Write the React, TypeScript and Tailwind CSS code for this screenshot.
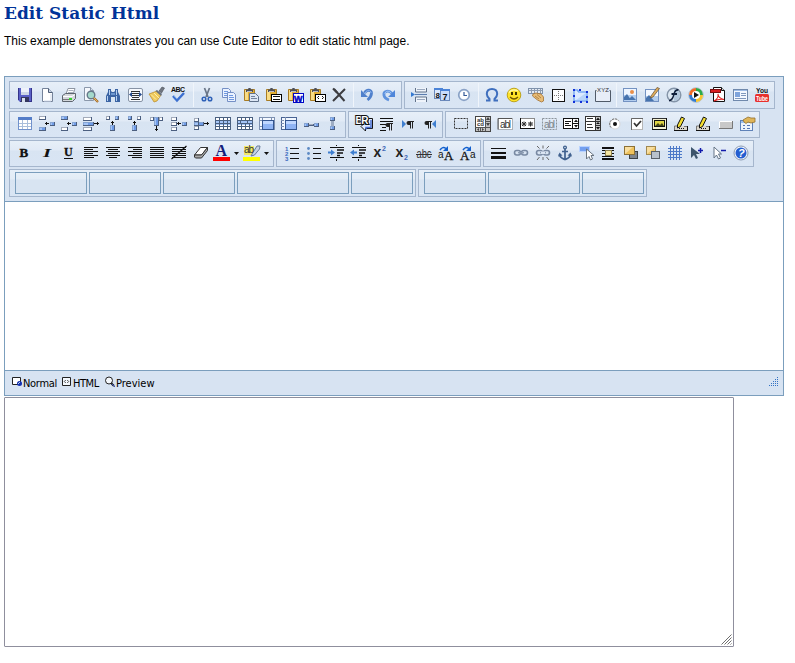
import { createElement, type ReactNode } from "react";

type Node = ReactNode;
const r = (x: number, y: number, w: number, h: number, f: string, s?: string): Node =>
  s ? (
    <rect x={x + 0.5} y={y + 0.5} width={w - 1} height={h - 1} fill={f} stroke={s} />
  ) : (
    <rect x={x} y={y} width={w} height={h} fill={f} />
  );
const p = (d: string, f = "none", s = "none", w = 1): Node => <path d={d} fill={f} stroke={s} strokeWidth={w} />;
const c = (x: number, y: number, q: number, f: string, s = "none", w = 1): Node => (
  <circle cx={x} cy={y} r={q} fill={f} stroke={s} strokeWidth={w} />
);
const t = (x: number, y: number, size: number, s: string, f = "#111", serif = false, bold = true, extra: object = {}): Node => (
  <text
    x={x}
    y={y}
    fontSize={size}
    fill={f}
    fontWeight={bold ? 700 : 400}
    fontFamily={serif ? '"Liberation Serif", serif' : '"Liberation Sans", sans-serif'}
    {...extra}
  >
    {s}
  </text>
);
const icon = (...shapes: Node[]): Node[] => shapes;

const K = "#111";
const B = "#3f7fd0";
const N = "#4a6080";
const LB = "#a4c4f6";

const clip = (): Node[] => [
  p("M4.500 5.500h10v11h-10z", "#e3ae35", "#a87c24"),
  p("M5 6h3v10H5z", "#f8dc86"),
  p("M6 8V5.500h2L8.500 4h2l.5 1.500h2V8z", "#4d4f58"),
  p("M7 7.500h5", "none", "#b9bdc8"),
];
const box = (x: number, y: number, w: number, h: number, blue = false): Node[] => [
  r(x, y, w, h, blue ? LB : "#fff", blue ? "#86a4d2" : "#a3abba"),
  blue && r(x + Math.floor(w / 2), y + 1, Math.ceil(w / 2) - 1, h - 2, "#6f9ce8"),
  p(`M${x} ${y + h - 0.5}h${w}M${x + w - 0.5} ${y}v${h}`, "none", "#4c5f80"),
];
const arL = (x: number, y: number): Node => p(`M${x} ${y + 0.5}h4M${x + 1.5} ${y - 1}v3`, "none", K);
const arR = (x: number, y: number): Node => p(`M${x} ${y + 0.5}h5M${x + 3.5} ${y - 1}v3`, "none", K);
const arU = (x: number, y: number): Node => p(`M${x + 0.5} ${y}v4M${x - 1} ${y + 1.5}h3`, "none", K);
const lines = (rows: [number, number][], col = K): Node => p(rows.map(([x, w], i) => `M${x} ${5.5 + i * 2}h${w}`).join(""), "none", col);
const pilcrow = (x: number, y: number): Node => (
  <>
    {p(`M${x + 3} ${y}h-1.500a2 2 0 0 0 0 4h1.500z`, "#222")}
    {p(`M${x + 2} ${y + 0.5}h5M${x + 3.5} ${y}v7.500M${x + 5.5} ${y}v7.500`, "none", "#222")}
  </>
);

const cutePage = (x: number, y: number): Node[] => [
  p(`M${x}.5 ${y}.5h6l2 2v7h-8z`, "#eaf2ff", "#7590c6"),
  p(`M${x + 2} ${y + 3.5}h4M${x + 2} ${y + 5.5}h5M${x + 2} ${y + 7.5}h5`, "none", "#6f98e0"),
];

const row1a: (Node[] | "sep")[] = [
  icon(
    p("M4 4h14v14H6l-2-2z", "#5a60c6"),
    p("M4 4h1v12H4zM17 4h1v14h-1zM6 17h11v1H6z", "#34348a"),
    r(7, 4, 8, 7, "#eef2fa"),
    p("M7 8h8v3H7z", "#cdd6e6"),
    r(7, 13, 8, 5, "#33365f"),
    r(8, 14, 3, 4, "#d8dfec"),
  ),
  icon(p("M6.500 4.500h6l4 4v9h-10z", "#fff", "#75839a"), p("M12.500 4.500v4h4", "#c8d3e4", "#4f5f78"), p("M15 10v7H8", "none", "#d3dcec")),
  icon(
    p("M8 10l2-5.500h7l-2 6z", "#fff", "#8d95a2"),
    p("M10.500 6.500h5M10 8.500h5", "none", "#a9b1bf"),
    p("M4.500 11.500l3-2h10v5l-3 3h-10z", "#d3d7dc", "#5d646e"),
    p("M5 12.500h9l3-2", "none", "#fff"),
    p("M5 15.500h9", "none", "#777"),
    r(11, 14, 3, 2, "#36cf30"),
  ),
  icon(
    p("M4.500 3.500h6l3 3v10h-9z", "#f5f8fd", "#8b98ab"),
    p("M10.500 3.500v3h3", "#d5dfef", "#8b98ab"),
    c(11, 11, 3.8, "#a4d9cb", "#66788a", 1.4),
    p("M14 14l4 4", "none", "#a46a29", 2.3),
    p("M13.500 13.500l4 4", "none", "#f1cc6d", 0.8),
  ),
  icon(
    p("M6 5h3v2l1 1h2l1-1V5h3v3l2 4v6h-5v-5H9v5H4v-6l2-4z", "#3b64a4"),
    p("M7.500 6v5M14.500 6v5M5.500 12v5M14.500 12v5", "none", "#b8d1f1"),
    p("M9 9h4v2H9z", "#6c96cf"),
  ),
  icon(
    <rect x="4.500" y="4.500" width="14" height="13" rx="1.500" fill="#f7faff" stroke="#8793a5" />,
    p("M7 7.500h9M8 9.500h7M8 11.500h7M8 13.500h7M7 15.500h9", "none", "#333", 1),
    p("M5 10.500l3-2.500v5zM18 10.500l-3-2.500v5z", "#234a8d"),
  ),
  icon(
    p("M13 7l3-4 2.500 1-3 5z", "#707782", "#4a4d54", 0.6),
    p("M3 10l8-3 4 4-4 6-3 1z", "#efc95c", "#b98a2a", 0.7),
    p("M5 10.500l5 5M8 9l5 5", "none", "#fff0a8"),
    p("M11 6l5 4-1 2-5.500-5z", "#68717e"),
  ),
  icon(t(3, 7.5, 7, "ABC", "#111", false, true, { textLength: 14 }), p("M5 12l4 4.500 7-7.500", "none", "#3c70d0", 2.5), p("M6 12l3 3", "none", "#8eb9ef", 0.8)),
  "sep",
  icon(
    p("M8.500 4l3.500 9M13.500 4L10 13", "none", "#6a7688", 1.7),
    c(8, 15, 1.8, "none", "#2e61b8", 1.5),
    c(14, 15, 1.8, "none", "#2e61b8", 1.5),
  ),
  icon(...cutePage(4, 4), ...cutePage(9, 8)),
  icon(...clip(), p("M9.500 9.500h6l3 3v5h-9z", "#dce6f4", "#5f7088"), p("M11 12.500h4M11 14.500h6", "none", "#71839c")),
  icon(...clip(), r(9, 10, 11, 8, "#fff", "#000"), p("M11 12.500h7M11 15.500h7", "none", "#111")),
  icon(...clip(), r(9, 9, 11, 10, "#fff", "#0005c4"), t(10, 17.5, 9, "W", "#0005c4", false, true, { textLength: 9, stroke: "#0005c4", strokeWidth: 0.5 })),
  icon(...clip(), r(9, 10, 11, 8, "#fff", "#000"), p("M13 12l-1.500 1.500L13 15M16 12l1.500 1.500L16 15", "none", "#111")),
  icon(p("M6 5l10.500 12M17 5L5 17", "none", "#3c3c40", 2), p("M5 4.500l4 4", "none", "#3c3c40", 2)),
  "sep",
  icon(p("M8.500 9c2-4 7.500-3.500 7 .5-.3 2.500-2 5-4 6.500", "none", "#4f80cc", 2.8), p("M5 6v7h7z", "#4f80cc"), p("M9 9c2-3.500 6-3 6 0", "none", "#8db6f0")),
  icon(p("M14 9.500c-3-4-9-2.500-8 2 .4 2 2 3.500 5 4.500", "none", "#5e92de", 2.8), p("M17 6v7h-7z", "#4f86da"), p("M13 9c-2-3-6-2-6 1", "none", "#a5c9f8")),
];

const row1b: (Node[] | "sep")[] = [
  icon(
    p("M6.500 4v4h11V4M6.500 18v-5h11v5", "#eff4fb", "#61728a"),
    p("M8 5.500h8M8 15.500h8", "none", "#9aa9bf"),
    p("M6 10.500h12", "none", "#5a7cae"),
    p("M2 8l4 2.500-4 2.500z", "#367ad0"),
  ),
  icon(
    r(3, 4, 9, 11, "#dbe9ff", "#6a88bb"), r(3, 4, 9, 2, "#4b83d7"),
    r(9, 5, 10, 12, "#c8dcfa", "#6a88bb"), r(9, 5, 10, 2, "#4b83d7"),
    t(4.5, 13.5, 8, "8"), t(11.500, 15.500, 9, "7"),
  ),
  icon(c(11, 11, 5.3, "#edf4fc", "#8aa2c6", 1.7), c(11, 11, 4, "#fff"), p("M11 8v3.500h3", "none", "#345a98", 1.2)),
  "sep",
  icon(p("M5 16.500h3.500v-1.500c-2-2-2.700-3.500-2.700-5 0-3 2-5 5.200-5s5.200 2 5.200 5c0 1.500-.7 3-2.700 5v1.500H17", "none", "#3f6fbe", 2)),
  icon(c(11, 11, 6.8, "#ffe329", "#b19300", 0.8), p("M6 8.500a6 5 0 0 1 9-1.500", "none", "#fff8a4", 1.5), r(8, 8, 2, 3, "#423500"), r(12, 8, 2, 3, "#423500"), p("M7 13q4 4 8 0", "none", "#765b00", 1.2)),
  icon(
    r(3, 4, 15, 6, "#e4ebf4", "#7f92ac"), p("M4 6.500h13M6.500 5v4M9.500 5v4M12.500 5v4M15.500 5v4", "none", "#8c9bb0"),
    p("M8 10l3-1 5 1 2.500 3v4l-2 1-4-2-5-4z", "#e8bc76", "#a37131", 0.8), p("M10 12l4 3M12 10.500l4 3.500", "none", "#b48443"),
  ),
  icon(r(5, 5, 13, 13, "#fbfcfe", "#111"), <path d="M7 11.500h9M11.500 7v9" stroke="#777" strokeDasharray="1 1" />),
  icon(p("M5 6h4v2h9v9H5z", "#dceaff", "#4c8cf0"), p("M7 16l10-7v7z", "#b9d5fa"), p("M4 5h2v2H4zM10 5h2v2h-2zM17 7h2v2h-2zM4 11h2v2H4zM17 12h2v2h-2zM4 17h2v2H4zM11 17h2v2h-2zM17 17h2v2h-2z", "#1230d8")),
  icon(p("M5.500 6.500h-1v11h15v-11h-1", "#e8eef8", "#505a68"), t(6, 8, 6, "XYZ", "#333", false, false, { textLength: 12 })),
  "sep",
  icon(r(4, 4, 14, 14, "#b4ceef", "#7392c2"), r(5, 5, 12, 6, "#eef5ff"), c(13, 8, 2, "#e98f4a"), p("M5 16v-3l3-3 4 6zM9 16l4-4 4 4z", "#4673ae")),
  icon(r(4, 5, 14, 13, "#b6ceec", "#7392c2"), r(5, 6, 12, 6, "#f4f8ff"), p("M5 17v-3l3-3 5 6z", "#4673ae"), p("M10 12l6-8.500 2.500 1L12 13l-3 1z", "#e1ad5a", "#5b4b37", 0.7)),
  icon(c(11, 11, 6.800, "#dce7f2", "#8494a8", 1.4), p("M11 5a6 6 0 0 1 0 12z", "#b3c7dc"), p("M15.500 5q-3.500-.5-5 4H8.500v2h1.500Q9 15 6 16v1.500q4-.5 5.500-6.500H14V9h-2q.8-2.500 3.500-2.500z", "#101f3a")),
  icon(
    c(11, 11, 7.3, "#f7fafb", "#7d90a5", 0.5),
    p("M11 4A7 7 0 0 1 18 11h-4a3 3 0 0 0-3-3z", "#2ca94a"), p("M18 11A7 7 0 0 1 11 18v-4a3 3 0 0 0 3-3z", "#f6c42f"),
    p("M11 18A7 7 0 0 1 4 11h4a3 3 0 0 0 3 3z", "#347bd1"), p("M4 11A7 7 0 0 1 11 4v4a3 3 0 0 0-3 3z", "#f06c27"),
    c(11, 11, 4, "#fff"), p("M9 8l5 3-5 3z", "#111"),
  ),
  icon(p("M6.500 3.500h8l3 3v11h-11z", "#fff", "#111"), p("M14.500 3.500v3h3", "#ddd", "#111"), r(3, 5, 11, 4, "#d91c20", "#7c0d10"), p("M7 17q5-3 4-7 0 4 6 5.500-5-1-10 1.500", "none", "#df2020", 1.1)),
  icon(r(4, 5, 15, 12, "#f4f8ff", "#7089ac"), r(5, 6, 13, 1, "#a0bde6"), r(6, 8, 5, 5, "#7fa4dc"), p("M12 9.500h5M12 11.500h5M6 14.500h11", "none", "#8098bd")),
  icon(t(5, 9, 8, "You", "#111", false, true, { textLength: 12, lengthAdjust: "spacingAndGlyphs" }), <rect x="4" y="10" width="14" height="8" rx="1.500" fill="#e8302d" />, t(5, 16.5, 7, "Tube", "#fff", false, true, { textLength: 12, lengthAdjust: "spacingAndGlyphs" })),
];

const grid = (merged = false): Node[] => [
  r(3, 4, 16, 13, "#fff"),
  r(4, 8, 14, 4, LB),
  p(merged ? "M3 4.500h16M3 7.500h16M3 10.500h16M3 13.500h16M3 16.500h16M3.500 4v13M18.500 4v13M7.500 4v3M11.500 4v3M15.500 4v3M6.500 8v2M13.500 8v2M7.500 11v6M11.500 11v6M15.500 11v6" : "M3 4.500h16M3 7.500h16M3 10.500h16M3 13.500h16M3 16.500h16M3.500 4v13M7.500 4v13M11.500 4v13M15.500 4v13M18.500 4v13", "none", N),
];
const row2a: Node[][] = [
  icon(r(4, 4, 14, 13, "#fff", "#7192cc"), r(4, 4, 14, 3, "#547dc8"), p("M8.500 7v9M13.500 7v9M5 10.500h12M5 13.500h12", "none", "#a9bedb")),
  icon(...box(3, 3, 7, 4), ...box(3, 14, 7, 4, true), ...box(14, 9, 5, 4, true), arL(9, 10)),
  icon(...box(3, 3, 7, 4, true), ...box(3, 14, 7, 4), ...box(14, 9, 5, 4, true), arL(9, 10)),
  icon(...box(3, 4, 9, 4), ...box(3, 9, 11, 4, true), ...box(3, 14, 9, 4), arR(14, 10)),
  icon(...box(4, 3, 4, 4), ...box(13, 3, 4, 4, true), ...box(8, 12, 5, 6, true), arU(10, 8)),
  icon(...box(4, 3, 4, 4, true), ...box(13, 3, 4, 4), ...box(8, 12, 5, 6, true), arU(10, 8)),
  icon(...box(4, 4, 4, 4), ...box(13, 4, 4, 4), ...box(8, 4, 5, 9, true), p("M10.500 13v5M9 16.500h3", "none", K)),
  icon(...box(3, 4, 6, 4), ...box(3, 9, 6, 4), ...box(3, 14, 6, 4), ...box(14, 9, 5, 4, true), arL(9, 10)),
  icon(...box(4, 5, 5, 4), ...box(4, 13, 5, 4), ...box(4, 9, 10, 4, true), p("M8.500 9v4", "none", N), arR(14, 10)),
  icon(...grid()),
  icon(...grid(true)),
  icon(r(3, 4, 16, 13, "#f3f8ff", "#7d90b0"), p("M6.500 4v3M15.500 4v3M3 7.500h3M3 13.500h3", "none", "#7d90b0"), r(6, 7, 12, 10, "#8fb4f4", "#33558f"), r(7, 8, 10, 3, "#bfd7ff")),
  icon(r(3, 4, 16, 13, "#f3f8ff", "#4a6494"), p("M7.500 4v3M3 7.500h3M3 10.500h3M3 13.500h3", "none", "#7d90b0"), r(7, 7, 12, 10, "#8fb4f4", "#33558f"), r(8, 8, 10, 3, "#bfd7ff")),
  icon(...box(4, 10, 5, 4, true), ...box(9, 11, 5, 2), ...box(14, 10, 5, 4, true)),
  icon(...box(8, 4, 5, 4, true), p("M10.500 8v5", "none", "#9dacc3", 3), ...box(8, 13, 5, 4, true)),
];
const row2b: Node[][] = [
  icon(
    p("M12 5.500h7.500v10h-7V18L8 13.500 12.500 9v2.500H15V6", "#dfe9ff", "#111"),
    p("M18 7v7.500h-5v2", "none", "#4a6fd0", 1.500),
    t(2.5, 10.500, 10, "BR", "#fff", false, true, { stroke: "#111", strokeWidth: 2, paintOrder: "stroke", textLength: 13 }),
  ),
  icon(p("M5 5.500h13M5 8.500h13M5 11.500h6M7 14.500h4M5 17.500h6", "none", K), r(11, 10, 8, 9, "#dce6f4"), pilcrow(11, 10)),
  icon(p("M5 7l4 4-4 4z", B), pilcrow(10, 8)),
  icon(pilcrow(6, 8), p("M17 7l-4 4 4 4z", B)),
];
const windowForm = (): Node[] => [
  r(3, 5, 16, 11, "#fff", "#111"),
  p("M5 8.500h6M5 10.500h4M5 12.500h6M12.500 5v11M12 10.500h7", "none", K),
  p("M14 9h4l-2-2.500zM14 12h4l-2 2.500z", K),
];
const ab = (dash = false): Node[] => [
  dash ? (
    <rect x="4.5" y="5.500" width="14" height="11" fill="none" stroke="#8c949c" strokeDasharray="2 1" />
  ) : (
    <rect x="4.5" y="5.500" width="14" height="11" fill="#fff" stroke="#aeb2b8" />
  ),
  !dash && p("M4 16.500V5.500h14", "none", "#555"),
  t(6, 15, 10, "abl", dash ? "#7d848b" : "#333", false, false, { textLength: 11 }),
];
const pen = (): Node[] => [
  r(4, 13, 14, 5, "#dad6cd"),
  p("M4 17.500h14M17.500 13v5", "none", K),
  p("M4.500 17v-4h4M14 13.500h3", "none", "#777"),
  p("M7.500 12l4-8 3 1.500-4 8-3 1.500z", "#f4dd30", "#111", 1),
  p("M9 15.500h1M11 15.500h1M13 15.500h1", "none", K),
];
const star = (x: number): string => `M${x - 2.5} 11h5M${x} 8.500v5M${x - 2} 9l4 4M${x + 2} 9l-4 4`;
const row2c: Node[][] = [
  icon(<rect x="4.5" y="5.500" width="13" height="10" fill="none" stroke="#333" strokeDasharray="2 1" />),
  icon(
    r(3, 3, 16, 16, "#fff", "#444"), r(13, 4, 5, 14, "#c4c4c4"), r(4, 14, 14, 4, "#c4c4c4"),
    p("M13.500 3v15M3 14.500h15M14 8.500h4M8.500 14v4", "none", "#555"),
    t(5, 8.5, 6, "ab", "#333"), t(5, 13, 6, "cd", "#333"), p("M14 7h4l-2-3zM14 10h4l-2 3zM7 15v3l-2-1.500zM10 15v3l2-1.500z", "#444"),
  ),
  icon(...ab()),
  icon(r(4, 5, 15, 11, "#fff", "#8a8a8a"), p("M4 15.500h15M4.500 5v11", "none", K), p(star(8) + star(14.5), "none", "#333")),
  icon(...ab(true)),
  icon(...windowForm()),
  icon(
    r(3, 3, 16, 15, "#fff", "#333"), r(13, 4, 5, 13, "#c8c8c8"),
    p("M5 5.500h6M3 8.500h10M5 11.500h5M5 14.500h6M13.500 3v15M14 8.500h5M14 12.500h5", "none", "#333"),
    p("M14 7h4l-2-2.500zM14 11h4l-2-2zM14 14h4l-2 2.500z", K),
  ),
  icon(c(11, 11, 5, "#fff", "#d8d8d8"), <path d="M7 14.500a5 5 0 0 1 7.500-7" fill="none" stroke="#666" strokeDasharray="2 1" />, c(11, 11, 2, "#111")),
  icon(r(5, 5, 12, 12, "#fff", "#b5b5b5"), p("M5.500 17V5.500H17", "none", "#666"), p("M8 10l2.500 3L15 8", "none", "#333", 1.8)),
  icon(r(4, 5, 15, 12, "#f4f1d3", "#333"), r(6, 7, 11, 7, "#dfd445", "#111"), p("M7 13l3-3 2 2 2-2 2 3z", "#454616"), p("M4 16.500h15M18.500 5v12", "none", K)),
  icon(...pen()),
  icon(...pen()),
  icon(r(5, 8, 13, 7, "#c8c8c8"), p("M5.500 15V8.500h13", "none", "#fff"), p("M5 15.500h13.500V8", "none", "#777")),
  icon(
    r(4, 7, 13, 11, "#edf3fb", "#5f82b8"), r(5, 8, 11, 2, "#9dbfee"), p("M7 12.500h2M11 12.500h3M7 15.500h2M11 15.500h3", "none", "#5475b5"),
    p("M7 7l5-3 3 1 4 0v4l-4 1-3-1-2 1.500-2-1.500z", "#dfb55a", "#94722f", 0.8),
  ),
];

const row3a: Node[][] = [
  icon(t(5.500, 15, 13, "B", K, true, true, { stroke: K, strokeWidth: 0.4 })),
  icon(t(7, 15, 13, "I", K, true, true, { fontStyle: "italic", textLength: 8, lengthAdjust: "spacingAndGlyphs" })),
  icon(t(6, 14, 12, "U", K, true, true, { stroke: K, strokeWidth: 0.3 }), p("M6 16.500h9", "none", K)),
  icon(lines([[4, 14], [4, 9], [4, 14], [4, 9], [4, 14], [4, 10]])),
  icon(lines([[4, 14], [6, 10], [4, 14], [6, 10], [4, 14], [7, 8]])),
  icon(lines([[4, 14], [9, 9], [4, 14], [9, 9], [4, 14], [8, 10]])),
  icon(lines([[4, 14], [4, 14], [4, 14], [4, 14], [4, 14], [4, 14]])),
  icon(lines([[4, 14], [4, 14], [4, 14], [4, 14], [4, 14], [4, 14]]), p("M3.500 17L18.500 4", "none", K, 1.2)),
  icon(p("M4.500 13l6-7.500h7l-6 7.500z", "#fff", "#333"), p("M4.500 13h7l6-7.500v3l-6 7.500h-6l-1-1z", "#aaa", "#333")),
];
const row3b: Node[][] = [
  icon(p("M9 6.500h9M9 11.500h9M9 16.500h9", "none", K), ...["1", "2", "3"].map((s, i) => t(4, 8.5 + i * 5, 6, s, "#3969be"))),
  icon(p("M10 6.500h8M10 11.500h8M10 16.500h8", "none", K), ...[6.5, 11.5, 16.5].map((y) => c(5.5, y, 1.4, "#5d8ac4"))),
  icon(
    p("M5 5.500h14M5 15.500h14M11.500 3v1M11.500 17v2", "none", K), p("M12 8h7M12 11h6M12 13.500h3", "none", K, 1.6),
    p("M3 9.500h3v-2l4 3-4 3v-2H3z", B),
  ),
  icon(
    p("M5 5.500h14M5 15.500h14M11.500 3v1M11.500 17v2", "none", K), p("M12 8h7M12 11h6M12 13.500h3", "none", K, 1.6),
    p("M10 9.500H7v-2l-4 3 4 3v-2h3z", B),
  ),
  icon(t(4.5, 15, 14, "x", "#222"), t(13, 9, 7, "2", "#3f67b5")),
  icon(t(4.5, 15, 14, "x", "#222"), t(13, 18, 7, "2", "#3f67b5")),
  icon(t(3.5, 16, 12, "abc", "#333", false, false, { textLength: 15, lengthAdjust: "spacingAndGlyphs" }), p("M3 12.500h16", "none", "#333")),
  icon(t(3, 16, 10, "a", K, false, false), t(9, 18, 13, "A", K, true, false, { stroke: K, strokeWidth: 0.3 }), p("M5 8q2.500-4 6-1.500", "none", "#1260ce", 1.5), p("M13 4v5h-5z", "#1260ce")),
  icon(t(3, 18, 13, "A", K, true, false, { stroke: K, strokeWidth: 0.3 }), t(13, 16, 10, "a", K, false, false), p("M6 8q2.500-4 6-1.500", "none", "#1260ce", 1.5), p("M14 4v5H9z", "#1260ce")),
];
const links = (): Node[] => [
  <rect x="4.500" y="8.500" width="6" height="4.500" rx="2.200" fill="none" stroke="#7889a2" strokeWidth="1.600" />,
  <rect x="11.500" y="8.500" width="6" height="4.500" rx="2.200" fill="none" stroke="#7889a2" strokeWidth="1.600" />,
  p("M8 10.700h6", "none", "#8d9db3", 1.400),
];
const row3c: Node[][] = [
  icon(r(3, 6, 15, 1, K), r(3, 10, 15, 2, K), r(3, 14, 15, 3, K)),
  icon(...links()),
  icon(...links(), p("M9 10.700h4", "none", "#dce6f4", 2.500), p("M7.500 6.500L5 4M11 6.500V3.500M14.500 6.500L17 4M7.500 15L5 18M11 15v3M14.500 15l2.500 3", "none", "#666")),
  icon(c(11, 5.5, 1.4, "none", "#41628f", 1.3), p("M11 7v10M8 9.500h6M5.500 12c0 4 3 4.500 5.500 5.500 2.500-1 5.500-1.500 5.500-5.500", "none", "#41628f", 1.7), p("M4 14.500l1.500-4 3 3zM18 14.500l-1.500-4-3 3z", "#41628f")),
  icon(r(3, 4, 11, 6, "#74a0f0", "#b9d3ff"), p("M10.500 7v10l2.500-2.500 1.500 3.500 2-1-1.500-3.500h3z", "#fff", "#6a7580")),
  icon(p("M4 5.500h12M4 8.500h3M13 8.500h3M4 11.500h3M13 11.500h3M4 14.500h12M4 17.500h12M4 6.500h12M4 16.500h12", "none", K), r(7, 8, 7, 6, "#f5e6a1", "#8e804e")),
  icon(r(9, 9, 9, 8, "#7d858f", "#3b4249"), r(4, 4, 11, 9, "#efc25c", "#8c7136"), p("M5 5h8L5 12z", "#f8dea0")),
  icon(r(4, 4, 10, 9, "#efc86c", "#a08850"), p("M5 5h8L5 12z", "#f8dea0"), r(9, 9, 9, 8, "#b8c1cc", "#59616b")),
  icon(p("M4 6.500h14M4 9.500h14M4 12.500h14M4 15.500h14M6.500 4v14M9.500 4v14M12.500 4v14M15.500 4v14", "none", "#4c79c8")),
  icon(p("M5 5v11l3-3 2 4 2-1-2-4h4z", "#3e566d"), p("M12 8.500h5M14.500 6v5", "none", "#111aab", 1.5)),
  icon(p("M6 5v11l2.500-3 2 4 2-1-2-4h3z", "#fff", "#647587"), p("M13 8.500h5", "none", "#111aab", 1.5)),
  icon(c(11, 11, 7, "#f3f7fd", "#8b9bb2"), c(11, 11, 5.5, "#245ed0"), t(8, 15, 11, "?", "#fff", false, true, { fontStyle: "italic" })),
];

function Icon({ shapes, width = 22 }: { shapes: Node[]; width?: number }) {
  return createElement("svg", { className: "block shrink-0 overflow-visible", width, height: 22, viewBox: `0 0 ${width} 22` }, ...shapes);
}
function Group({ items, children, className = "" }: { items: (Node[] | "sep")[]; children?: Node; className?: string }) {
  return (
    <div className={`flex h-full shrink-0 items-start border border-[#a5b6cd] bg-[linear-gradient(to_bottom,#e7eff8_0px,#e1eaf6_9px,#d8e4f2_10px,#d9e5f4_100%)] pr-px pl-1 ${className}`}>
      {items.map((item, i) =>
        item === "sep" ? (
          <span key={i} className="-mt-px flex h-6 w-1.5 justify-center">
            <span className="h-full w-px bg-[#f0f5fb]" />
          </span>
        ) : (
          <Icon key={i} shapes={item} />
        ),
      )}
      {children}
    </div>
  );
}
function Selects({ widths }: { widths: string[] }) {
  return (
    <div className="flex h-7 gap-0.5 border border-[#a5b6cd] bg-[linear-gradient(to_bottom,#e7eff8_0px,#e3ecf6_9px,#d8e4f2_10px,#d9e5f4_100%)] py-0.5 pr-0.5 pl-[5px]">
      {widths.map((w, i) => (
        <div key={i} className={`h-[22px] shrink-0 ${w} border border-[#7b9ebd] bg-[linear-gradient(to_bottom,#e7eff8_0px,#e3ecf6_6px,#d8e4f2_7px,#d8e4f2_100%)]`} />
      ))}
    </div>
  );
}

export default function App() {
  return (
    <main className="h-[663px] w-[795px] overflow-hidden bg-white pl-1 text-black">
      <h1 className="h-[34px] pt-[2px] font-['DejaVu_Serif',serif] text-[17px] leading-[22px] font-bold text-[#003399]">Edit Static Html</h1>
      <p className="h-[42px] font-['Liberation_Sans',sans-serif] text-[12px] leading-[14px]">This example demonstrates you can use Cute Editor to edit static html page.</p>
      <section className="flex h-80 w-[780px] flex-col border border-[#7b9ebd] bg-[#d7e3f2]">
        <div className="flex h-[125px] shrink-0 flex-col gap-0.5 border-b border-[#7b9ebd] pt-1 pl-1">
          <div className="flex h-7 gap-0.5">
            <Group items={row1a} className="pt-0.5" />
            <Group items={row1b} className="pt-0.5" />
          </div>
          <div className="flex h-[27px] gap-0.5">
            <Group items={row2a} className="pt-px" />
            <Group items={row2b} className="pt-px" />
            <Group items={row2c} className="pt-px" />
          </div>
          <div className="flex h-[27px] gap-0.5">
            <Group items={row3a} className="pt-px">
              <Icon width={30} shapes={icon(t(3.5, 14, 16, "A", "#14207c", true), r(1, 15, 17, 4, "#f00"), p("M22 10h5l-2.500 3z", K))} />
              <Icon
                width={30}
                shapes={icon(
                  r(2, 4, 10, 9, "#f0e768"),
                  p("M10 12l5-8 3 0-.5 3-5 6-3.500 1z", "#c5d2e4", "#687d9b"),
                  t(2, 11, 10, "ab", "#333", false, false, { textLength: 10 }),
                  r(1, 15, 17, 4, "#ff0"),
                  p("M22 10h5l-2.500 3z", K),
                )}
              />
            </Group>
            <Group items={row3b} className="pt-px" />
            <Group items={row3c} className="pt-px" />
          </div>
          <div className="flex h-7 gap-0.5">
            <Selects widths={["w-[72px]", "w-[72px]", "w-[72px]", "w-[112px]", "w-[62px]"]} />
            <Selects widths={["w-[62px]", "w-[92px]", "w-[62px]"]} />
          </div>
        </div>
        <div className="h-[168px] shrink-0 bg-white" />
        <div className="flex h-[25px] shrink-0 justify-between border-t border-[#7b9ebd] pt-px pl-1.5 font-['DejaVu_Sans_Condensed','DejaVu_Sans',sans-serif] text-[11px] leading-[24px]">
          <div className="flex">
            <div className="flex w-[50px]">
              <svg className="mt-1 h-3 w-3 shrink-0" viewBox="0 0 12 12">
                <path d="M1.500 1.500h8v7h-8z" fill="#fff" stroke="#222" />
                <circle cx="8.500" cy="7.500" r="2.500" fill="#1430b0" />
                <path d="M7 8l2-2" stroke="#b4cae4" />
              </svg>
              <span className="tracking-[-0.3px]">Normal</span>
            </div>
            <div className="flex w-[43px]">
              <svg className="mt-1 h-3 w-3 shrink-0" viewBox="0 0 12 12">
                <path d="M1.500 1.500h8v8h-8z" fill="#f4f8fd" stroke="#222" />
                <path d="M4.800 4L3.300 5.500l1.500 1.500M6.200 4l1.500 1.500L6.200 7" fill="none" stroke="#222" strokeWidth=".8" />
              </svg>
              <span className="tracking-[-0.45px]">HTML</span>
            </div>
            <div className="flex">
              <svg className="mt-1 h-3 w-3 shrink-0" viewBox="0 0 12 12">
                <circle cx="5" cy="4.500" r="3.500" fill="#f4f8fd" stroke="#222" />
                <path d="M7 7l3 3" stroke="#222" strokeWidth="2" />
                <path d="M8 8l3 3" stroke="#334eb8" />
              </svg>
              <span className="tracking-[0px]">Preview</span>
            </div>
          </div>
          <svg className="mt-[5px] mr-1 h-2.5 w-2.5" viewBox="0 0 10 10" shapeRendering="crispEdges">
            {[0, 1, 2, 3, 4].map((y) => Array.from({ length: y + 1 }, (_, x) => <rect key={`${x}-${y}`} x={8 - x * 2} y={y * 2} width="1" height="1" fill="#3272c4" />))}
          </svg>
        </div>
      </section>
      <div className="relative mt-px h-[250px] w-[730px]">
        <textarea aria-label="Static HTML source" className="block h-full w-full resize-none rounded-[1px] border border-[#8f8f9d] bg-white outline-none" />
        <svg className="absolute right-0.5 bottom-0.5 h-[11px] w-[11px]" viewBox="0 0 11 11">
          <path d="M.5 10.500l10-10M3.500 10.500l7-7M6.500 10.500l4-4M9.500 10.500l1-1" stroke="#6f6f6f" />
        </svg>
      </div>
    </main>
  );
}
